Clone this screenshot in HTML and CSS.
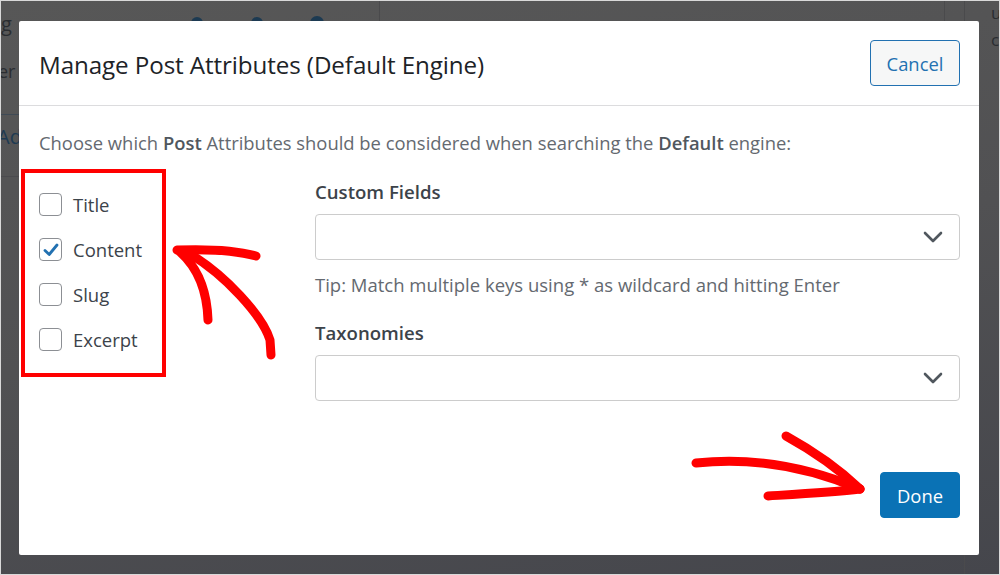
FILE: index.html
```html
<!DOCTYPE html>
<html>
<head>
<meta charset="utf-8">
<link rel="stylesheet" href="styles.css">
</head>
<body>
<div class="screen">
  <div class="bg">
    <span class="bg-g">g</span>
    <span class="bg-er">er</span>
    <span class="bg-add">Add</span>
    <span class="bg-u">u</span>
    <span class="bg-c">c</span>
    <span class="bg-dot d1"></span><span class="bg-dot d2"></span><span class="bg-dot d3"></span>
    <span class="bg-vl v1"></span><span class="bg-vl v2"></span><span class="bg-vl v3"></span>
    <span class="bg-hl h1"></span><span class="bg-hl h2"></span>
  </div>
  <div class="modal">
    <div class="modal-header">
      <h1 class="modal-title">Manage Post Attributes (Default Engine)</h1>
      <button class="btn btn-secondary">Cancel</button>
    </div>
    <div class="modal-body">
      <p class="intro">Choose which <strong>Post</strong> Attributes should be considered when searching the <strong>Default</strong> engine:</p>
      <div class="columns">
        <ul class="attr-list">
          <li class="attr"><span class="cb"></span><span>Title</span></li>
          <li class="attr"><span class="cb checked"><svg viewBox="0 0 20 20" width="20" height="20"><path d="M4 10.5 L8.2 14.5 L16 5" fill="none" stroke="#2271b1" stroke-width="2.8" stroke-linecap="round" stroke-linejoin="round"/></svg></span><span>Content</span></li>
          <li class="attr"><span class="cb"></span><span>Slug</span></li>
          <li class="attr"><span class="cb"></span><span>Excerpt</span></li>
        </ul>
        <div class="fields">
          <div class="field-label">Custom Fields</div>
          <div class="select"><svg class="chev" viewBox="0 0 20 12" width="20" height="12"><path d="M2 2 L10 10 L18 2" fill="none" stroke="#50575e" stroke-width="2.6" stroke-linecap="round" stroke-linejoin="round"/></svg></div>
          <div class="tip">Tip: Match multiple keys using * as wildcard and hitting Enter</div>
          <div class="field-label second">Taxonomies</div>
          <div class="select"><svg class="chev" viewBox="0 0 20 12" width="20" height="12"><path d="M2 2 L10 10 L18 2" fill="none" stroke="#50575e" stroke-width="2.6" stroke-linecap="round" stroke-linejoin="round"/></svg></div>
          <div class="actions"><button class="btn btn-primary">Done</button></div>
        </div>
      </div>
    </div>
  </div>
  <div class="redbox"></div>
  <svg class="annot" viewBox="0 0 1000 575" width="1000" height="575">
    <g fill="none" stroke="#ff0000" stroke-width="9" stroke-linecap="round" stroke-linejoin="round">
      <path d="M177 250 C205 249 235 250 256 256"/>
      <path d="M180 252 C198 268 207 290 208 320"/>
      <path d="M190 254 C225 275 262 315 270 340 L271 355"/>
      <path d="M696 463 C760 456 815 470 860 489"/>
      <path d="M786 436 C815 452 840 470 860 489"/>
      <path d="M768 496 C800 494 835 492 860 489"/>
    </g>
  </svg>
</div>
</body>
</html>
```
FILE: styles.css
```css
* { box-sizing: border-box; }
html, body { margin: 0; padding: 0; }
body { width: 1000px; height: 575px; overflow: hidden; font-family: "Open Sans", "Noto Sans", sans-serif; }

.screen {
  position: relative;
  width: 1000px;
  height: 575px;
  border: 1px solid #d9d9d9;
  background: linear-gradient(170deg, #575757 0%, #515153 50%, #45464c 100%);
  padding: 20px 0 0 18px;
  overflow: hidden;
}

.bg { position: absolute; inset: 0; color: #2a2d31; font-size: 18px; }
.bg span { position: absolute; }
.bg-g { left: 0; top: 9px; font-size: 20px; }
.bg-er { left: -3px; top: 58px; }
.bg-add { left: -4px; top: 122px; color: #1e3a52; font-size: 20px; }
.bg-u { left: 990px; top: 0px; font-size: 17px; }
.bg-c { left: 990px; top: 27px; font-size: 17px; }
.bg-dot { width: 12px; height: 12px; border-radius: 50%; background: #1c3a52; top: 16px; }
.d1 { left: 190px; } .d2 { left: 250px; } .d3 { left: 309px; width: 14px; height: 14px; top: 15px; }
.bg-vl { width: 1px; top: 0; height: 21px; background: #4a4a4c; }
.v1 { left: 378px; } .v2 { left: 943px; } .v3 { left: 963px; height: 575px; }
.bg-hl { height: 1px; left: 0; width: 19px; background: #3f4a55; }
.h1 { top: 113px; } .h2 { top: 175px; background: #4b4b4e; }

.modal {
  position: relative;
  width: 960px;
  height: 534px;
  background: #fff;
  border-radius: 2px;
  display: flex;
  flex-direction: column;
}

.modal-header {
  height: 85px;
  border-bottom: 1px solid #dcdcde;
  display: flex;
  align-items: center;
  justify-content: space-between;
  padding: 0 19px 0 20px;
}
.modal-title {
  margin: 2px 0 0 0;
  font-size: 24.2px;
  font-weight: 400;
  color: #1d2327;
  letter-spacing: -0.1px;
}

.btn {
  font-family: inherit;
  font-size: 18.4px;
  border-radius: 4px;
  height: 46px;
  cursor: pointer;
}
.btn-secondary {
  width: 90px;
  margin-top: 0;
  background: #f6f7f7;
  border: 1px solid #2271b1;
  color: #2271b1;
}
.btn-primary {
  width: 80px;
  background: #0a72b5;
  border: 1px solid #0a72b5;
  color: #fff;
}

.modal-body { padding: 25px 19px 0 20px; }
.intro {
  margin: 0;
  font-size: 18.4px;
  line-height: 24px;
  color: #646970;
  white-space: nowrap;
}
.intro strong { font-weight: 600; color: #50575e; }

.columns { display: flex; margin-top: 25px; }
.attr-list {
  list-style: none;
  margin: 0;
  padding: 2px 0 0 0;
  width: 276px;
}
.attr {
  display: flex;
  align-items: center;
  height: 45px;
  font-size: 18.5px;
  color: #3c434a;
}
.cb {
  width: 23px;
  height: 23px;
  border: 1px solid #8c8f94;
  border-radius: 4px;
  margin-right: 11px;
  display: flex;
  align-items: center;
  justify-content: center;
  background: #fff;
}

.fields { flex: 1; }
.field-label {
  font-size: 18.6px;
  font-weight: 600;
  color: #3c434a;
  line-height: 24px;
  margin: 0 0 10px 0;
}
.field-label.second { margin-top: 24px; }
.select {
  height: 46px;
  border: 1px solid #ccc;
  border-radius: 4px;
  display: flex;
  align-items: center;
  justify-content: flex-end;
  padding-right: 16px;
}
.tip {
  font-size: 18.5px;
  color: #646970;
  line-height: 24px;
  margin-top: 13px;
  white-space: nowrap;
}
.actions { display: flex; justify-content: flex-end; margin-top: 71px; }

.redbox {
  position: absolute;
  left: 20px;
  top: 168px;
  width: 145px;
  height: 208px;
  border: 4px solid #ff0000;
}
.annot { position: absolute; left: -1px; top: -1px; pointer-events: none; }
```
